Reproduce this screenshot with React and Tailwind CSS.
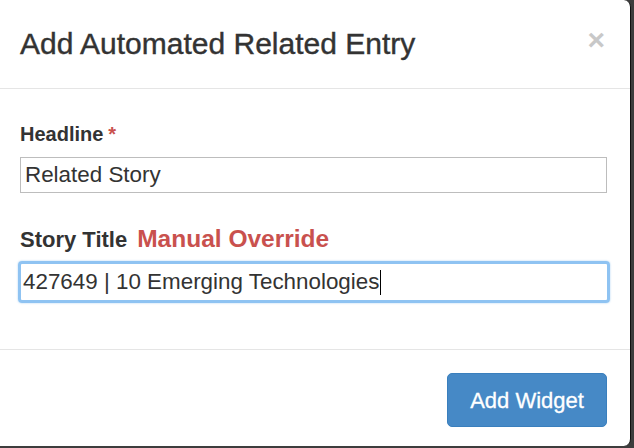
export default function App() {
  return (
    <div className="h-[448px] w-[634px] overflow-hidden bg-[#3d3d3d] font-[family-name:'Liberation_Sans',Arial,sans-serif] text-[#333]">
      <div className="flex h-[446px] w-[631px] flex-col rounded-r-[7px] border-r border-[#111] bg-white">
        <div className="flex h-[89px] items-center justify-between border-b border-[#e5e5e5] pl-[20px] pr-[25px]">
          <h3 className="text-[30px] font-medium leading-none text-[#333] [-webkit-text-stroke:0.4px_#333]">Add Automated Related Entry</h3>
          <span className="-mt-[8px] text-[30px] font-bold leading-none text-[#c8c8c8]">×</span>
        </div>

        <div className="flex-1 border-b border-[#e5e5e5] px-[20px] pt-[31px]">
          <div className="flex items-baseline gap-[5px] text-[20px] font-bold leading-[28px]">
            <span>Headline</span>
            <span className="text-[#c9514e]">*</span>
          </div>
          <div className="mt-[9px] flex h-[36px] w-[587px] items-center border border-[#bdbdbd] px-[4px] text-[22.4px]">
            Related Story
          </div>

          <div className="mt-[32px] flex items-baseline gap-[10px] font-bold">
            <span className="text-[22px] leading-[28px]">Story Title</span>
            <span className="text-[24.5px] leading-[28px] text-[#c9514e]">Manual Override</span>
          </div>
          <div className="mt-[7px] flex h-[42px] w-[592px] -ml-[2px] items-center rounded-[4px] border-[3px] border-[#8fc3f2] px-[2px] text-[22.4px] shadow-[0_0_2px_rgba(102,175,233,0.6)]">
            <span>427649 | 10 Emerging Technologies</span>
            <span className="ml-[1px] inline-block h-[25px] w-[1px] bg-black" />
          </div>
        </div>

        <div className="flex h-[96px] items-start justify-end pr-[23px] pt-[23px]">
          <button className="h-[54px] w-[160px] rounded-[5px] border border-[#3a7fbd] bg-[#4689c6] text-[22px] text-white [-webkit-text-stroke:0.3px_#fff]">
            Add Widget
          </button>
        </div>
      </div>
    </div>
  )
}
